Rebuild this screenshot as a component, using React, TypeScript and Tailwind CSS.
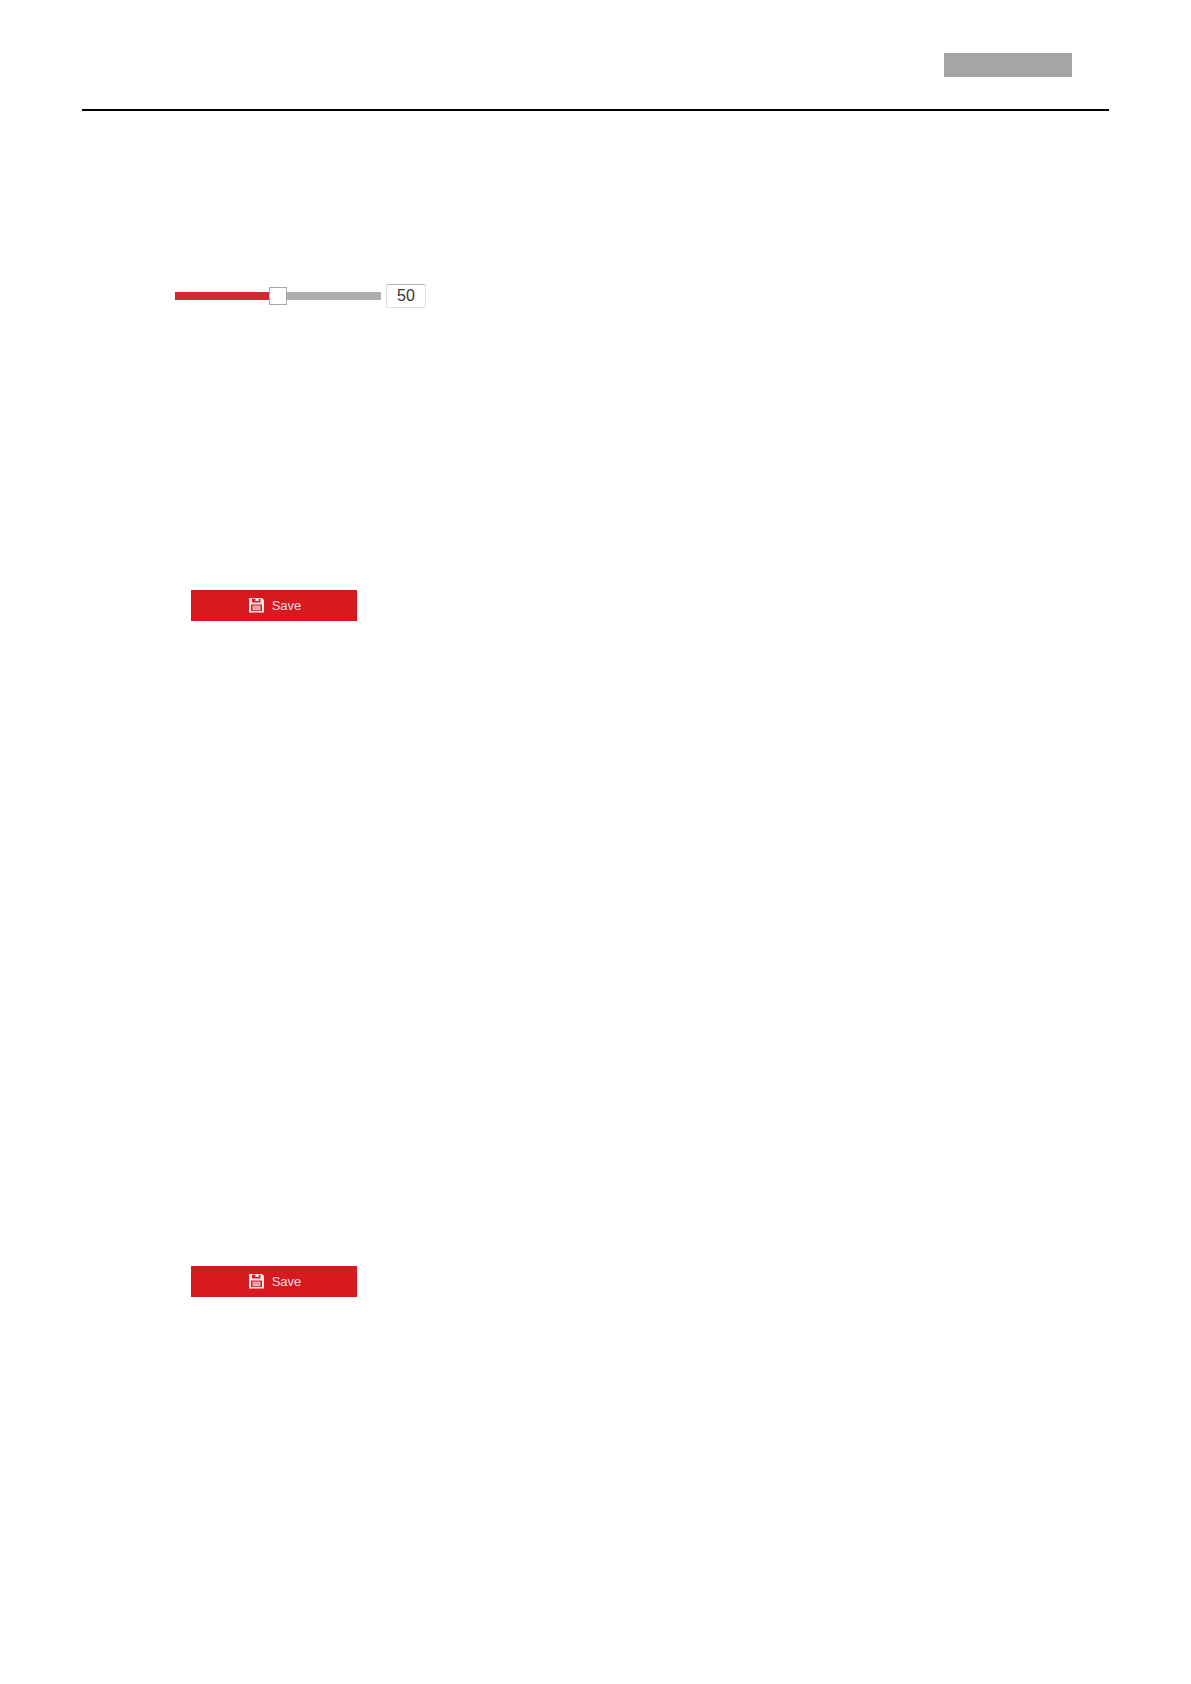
import { useState } from "react";

function SaveIcon() {
  return (
    <svg viewBox="0 0 15 15" className="h-[15px] w-[15px]" aria-hidden="true">
      <path
        fill="#fdeeee"
        fillRule="evenodd"
        d="M0 0H13L15 2V14.5H0ZM3 .8V4.6H11.5V.8H9.8V3H6.4V.8ZM2 6.6V13H13V6.6Z"
      />
      <path fill="#f3b4b6" d="M3.5 7.6h8v4.6h-8z" />
      <path fill="#e0898c" d="M4.5 8.8h6v.6h-6zM4.5 10.4h6v.6h-6z" />
    </svg>
  );
}

function SaveButton() {
  return (
    <button
      type="button"
      className="flex h-[31px] w-[166px] cursor-pointer items-center justify-center gap-2 bg-[#d71920] pl-0.5 text-[13px] leading-4 text-[#fbdfe0]"
    >
      <SaveIcon />
      Save
    </button>
  );
}

function LevelSlider() {
  const [level, setLevel] = useState(50);

  return (
    <div className="flex items-center gap-[5px]">
      <input
        type="range"
        aria-label="Level"
        min={0}
        max={100}
        value={level}
        onChange={(e) => setLevel(Number(e.target.value))}
        style={{
          backgroundImage: `linear-gradient(to right, #cd2a32 ${level}%, #adadad ${level}%)`,
        }}
        className="h-2 w-[206px] cursor-pointer appearance-none [&::-webkit-slider-thumb]:h-[18px] [&::-webkit-slider-thumb]:w-[18px] [&::-webkit-slider-thumb]:appearance-none [&::-webkit-slider-thumb]:border [&::-webkit-slider-thumb]:border-[#a8a8a8] [&::-webkit-slider-thumb]:bg-white"
      />
      <input
        type="text"
        aria-label="Level value"
        value={level}
        onChange={(e) => setLevel(Number(e.target.value) || 0)}
        className="h-6 w-10 rounded-xs border border-[#dedede] border-t-[#b4b4b4] bg-white text-center text-base text-[#333333]"
      />
    </div>
  );
}

export default function App() {
  return (
    <div className="min-h-screen bg-white px-[82px] font-['Liberation_Sans',Arial,sans-serif]">
      <header className="flex justify-end border-b-2 border-black pt-[53px] pr-[37px] pb-8">
        <div className="h-6 w-32 bg-[#a5a5a5]" />
      </header>

      <main className="flex flex-col pt-[173px] pb-24">
        <section className="pl-[93px]">
          <LevelSlider />
        </section>
        <section className="mt-[282px] pl-[109px]">
          <SaveButton />
        </section>
        <section className="mt-[645px] pl-[109px]">
          <SaveButton />
        </section>
      </main>
    </div>
  );
}
